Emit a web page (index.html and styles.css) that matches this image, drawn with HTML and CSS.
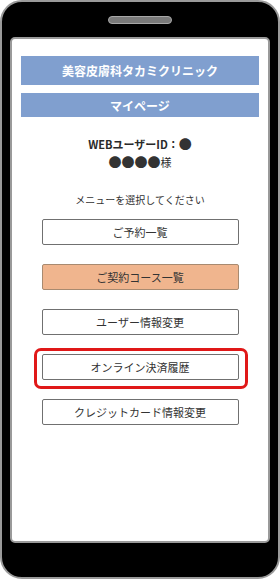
FILE: index.html
```html
<!DOCTYPE html>
<html lang="ja">
<head>
<meta charset="utf-8">
<link rel="stylesheet" href="styles.css">
</head>
<body>
<div class="phone">
  <div class="speaker"></div>
  <div class="screen">
    <div class="bar bar-title">美容皮膚科タカミクリニック</div>
    <div class="bar bar-sub">マイページ</div>
    <div class="info">
      <div class="info-line">WEBユーザーID：<span class="dot">●</span></div>
      <div class="info-line"><span class="dot">●●●●</span><span class="sama">様</span></div>
    </div>
    <p class="lead">メニューを選択してください</p>
    <div class="menu">
      <div class="btn">ご予約一覧</div>
      <div class="btn btn-active">ご契約コース一覧</div>
      <div class="btn">ユーザー情報変更</div>
      <div class="btn btn-marked">オンライン決済履歴</div>
      <div class="btn">クレジットカード情報変更</div>
    </div>
  </div>
</div>
</body>
</html>
```
FILE: styles.css
```css
* { box-sizing: border-box; }
html, body { margin: 0; padding: 0; background: #fff; }
body {
  font-family: "Noto Sans CJK JP", "Noto Sans", sans-serif;
  color: #333;
}
.phone {
  width: 280px;
  height: 579px;
  background: #000;
  border: 2px solid #9a9a9a;
  border-radius: 22px;
  padding-top: 14px;
  display: flex;
  flex-direction: column;
  align-items: center;
}
.speaker {
  width: 64px;
  height: 8px;
  border-radius: 4px;
  background: #7a7a7a;
  border: 1.5px solid #a8a8a8;
}
.screen {
  margin-top: 13px;
  width: 260px;
  height: 506px;
  background: #fff;
  border: 2px solid #9a9a9a;
  border-radius: 5px;
  padding: 17px 9px 0;
  display: flex;
  flex-direction: column;
}
.bar {
  background: #809fcf;
  color: #fff;
  font-weight: bold;
  font-size: 12px;
  display: flex;
  align-items: center;
  justify-content: center;
}
.bar-title { height: 29px; }
.bar-sub { height: 24px; margin-top: 8px; }
.info {
  margin-top: 18px;
  text-align: center;
  font-weight: bold;
  font-size: 11px;
  line-height: 18px;
  color: #2a2a2a;
}
.dot { font-size: 13px; color: #333; }
.sama { font-weight: normal; }
.lead {
  margin: 21px 0 0;
  text-align: center;
  font-size: 10px;
  line-height: 16px;
}
.menu {
  margin-top: 11px;
  display: flex;
  flex-direction: column;
  align-items: center;
  gap: 19px;
}
.btn {
  width: 197px;
  height: 26px;
  border: 1px solid #707070;
  border-radius: 2px;
  background: #fff;
  font-size: 11px;
  display: flex;
  align-items: center;
  justify-content: center;
  color: #333;
}
.btn-active {
  background: #f0b58e;
  border-color: #a88a70;
}
.btn-marked { position: relative; }
.btn-marked::after {
  content: "";
  position: absolute;
  top: -7px;
  bottom: -10px;
  left: -9px;
  right: -10px;
  border: 3px solid #e01818;
  border-radius: 7px;
}
```
